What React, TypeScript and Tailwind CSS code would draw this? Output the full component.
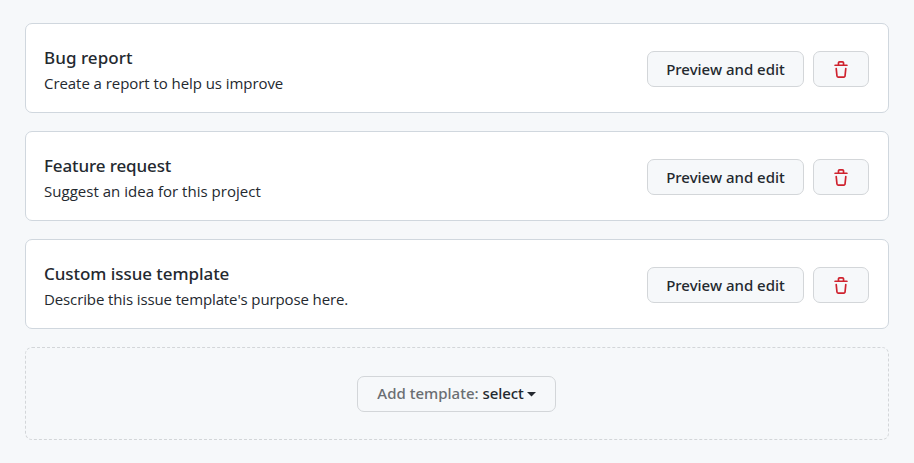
const templates = [
  { title: "Bug report", text: "Create a report to help us improve", titleTracking: "tracking-[0.05px]", textTracking: "tracking-[-0.06px]" },
  { title: "Feature request", text: "Suggest an idea for this project", titleTracking: "tracking-[-0.12px]", textTracking: "tracking-[0.02px]" },
  { title: "Custom issue template", text: "Describe this issue template's purpose here.", titleTracking: "tracking-[-0.06px]", textTracking: "tracking-[-0.12px]" },
];

const button =
  "flex h-9 items-center justify-center whitespace-nowrap rounded-[7px] border border-[#d3d6d9] bg-[#f6f8fa] text-[15px] font-medium text-[#24292f]";

function Trash() {
  return (
    <svg className="mt-px" width="18" height="18" viewBox="0 0 16 16" fill="#cf222e" aria-hidden="true">
      <path
        fillRule="evenodd"
        d="M6.5 1.75a.25.25 0 01.25-.25h2.5a.25.25 0 01.25.25V3h-3V1.75zm4.5 0V3h2.25a.75.75 0 010 1.5H2.75a.75.75 0 010-1.5H5V1.75C5 .784 5.784 0 6.75 0h2.5C10.216 0 11 .784 11 1.75zM4.496 6.675a.75.75 0 10-1.492.15l.66 6.6A1.75 1.75 0 005.405 15h5.19c.9 0 1.652-.681 1.741-1.576l.66-6.6a.75.75 0 00-1.492-.149l-.66 6.6a.25.25 0 01-.249.225h-5.19a.25.25 0 01-.249-.225l-.66-6.6z"
      />
    </svg>
  );
}

export default function App() {
  return (
    <main className="h-[463px] bg-[#f6f8fa] pl-[25px] pt-[23px] font-['Noto_Sans','Open_Sans',sans-serif] text-[#24292f]">
      <div className="flex w-[864px] flex-col gap-[18px]">
        {templates.map((t) => (
          <section key={t.title} className="flex h-[90px] items-center justify-between rounded-[7px] border border-[#d0d7de] bg-white pl-[18px] pr-[19px]">
            <div className="whitespace-nowrap pt-[4px]">
              <h3 className={`text-[17px] font-medium leading-[26px] ${t.titleTracking}`}>{t.title}</h3>
              <p className={`font-['Open_Sans','Noto_Sans',sans-serif] text-[15px] font-[370] leading-[25px] ${t.textTracking}`}>{t.text}</p>
            </div>
            <div className="flex gap-[9px] pt-[2px]">
              <button className={`${button} w-[157px]`}>Preview and edit</button>
              <button className={`${button} w-[56px]`} aria-label="Delete template">
                <Trash />
              </button>
            </div>
          </section>
        ))}
        <section className="flex h-[93px] items-center justify-center rounded-[7px] border border-dashed border-[#d3d6d9] pr-px">
          <button className={`${button} w-[199px]`}>
            <span className="text-[#6a6e72]">Add template:</span>
            <span className="ml-1 tracking-[-0.1px]">select</span>
            <svg className="ml-[3px] mt-[2px]" width="9" height="5" viewBox="0 0 9 5" fill="#24292f" aria-hidden="true">
              <path d="M0 0h9L4.5 4.5z" />
            </svg>
          </button>
        </section>
      </div>
    </main>
  );
}
